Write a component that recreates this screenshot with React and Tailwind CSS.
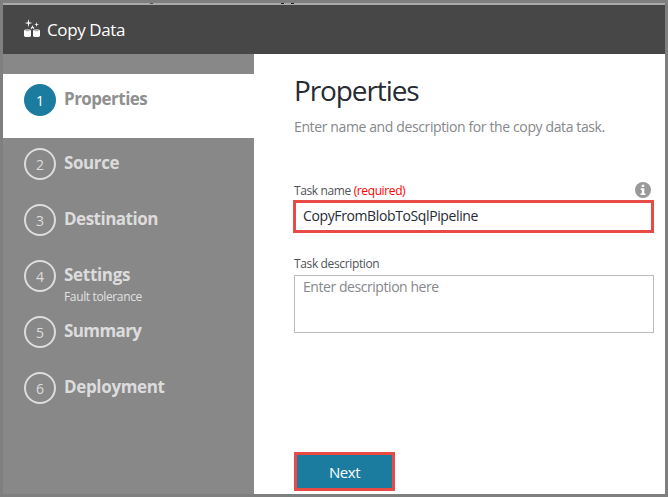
const steps = [
  { n: 1, label: "Properties", active: true, tracking: "tracking-[-0.52px]" },
  { n: 2, label: "Source", tracking: "tracking-[-0.4px]" },
  { n: 3, label: "Destination", tracking: "tracking-[-0.5px]" },
  { n: 4, label: "Settings", note: "Fault tolerance", tracking: "tracking-[-0.3px]" },
  { n: 5, label: "Summary", tracking: "tracking-[-0.6px]" },
  { n: 6, label: "Deployment", tracking: "tracking-[-0.34px]" },
];

function CopyDataIcon() {
  return (
    <svg className="mt-[14px] h-[18px] w-[17px]" viewBox="0 0 17 18" fill="#fff">
      <path d="M4.5 0 L5.2 3.3 L8.5 4 L5.2 4.8 L4.5 8.3 L3.8 4.8 L0.8 4 L3.8 3.3Z" />
      <path d="M12.6 3 L13.1 4.9 L15 5.4 L13.1 5.9 L12.6 8 L12.1 5.9 L10.2 5.4 L12.1 4.9Z" />
      <path d="M8.5 6 L9 7.6 L10.4 9 L9.4 10 L8.5 8.8 L7.4 10 L6.6 9.2 L8 7.6Z" />
      <path d="M0 12 Q0 10.5 1.6 10.5 H5.4 Q7 10.5 7 12 V16.6 Q7 18 5.4 18 H1.6 Q0 18 0 16.6Z" />
      <path d="M9 12 Q9 10.5 10.6 10.5 H14.4 Q16 10.5 16 12 V16.6 Q16 18 14.4 18 H10.6 Q9 18 9 16.6Z" />
      <path d="M1.5 11.7H5.5M10.5 11.7H14.5" stroke="#777" strokeWidth="0.8" />
    </svg>
  );
}

function InfoIcon() {
  return (
    <svg className="mt-px h-4 w-4" viewBox="0 0 16 16">
      <circle cx="8" cy="8" r="8" fill="#999" />
      <path d="M6.7 2.7h2.6v2.2H6.7zM5.7 6.2h3.6v5.4h1.2v1.5H5.5v-1.5h1.3V7.7H5.7z" fill="#fff" />
    </svg>
  );
}

function Step({ step }) {
  return (
    <li className={`flex pl-[21px] pt-[10px] ${step.active ? "h-16 bg-white" : "h-14"}`}>
      <span
        className={`flex h-8 w-8 shrink-0 justify-center rounded-full border-2 text-[14px] leading-[29px] ${
          step.active ? "border-[#1b7c9f] bg-[#1b7c9f] text-white" : "border-[#dcdcdc] text-[#dcdcdc]"
        }`}
      >
        {step.n}
      </span>
      <div className="ml-2">
        <div
          className={`text-[17px] leading-[30px] font-bold whitespace-nowrap ${step.tracking} ${
            step.active ? "text-[#8f8f8f]" : "text-[#dcdcdc]"
          }`}
        >
          {step.label}
        </div>
        {step.note && (
          <div className="-mt-px text-[12px] leading-4 tracking-[-0.36px] whitespace-nowrap text-[#e0e0e0]">{step.note}</div>
        )}
      </div>
    </li>
  );
}

export default function App() {
  return (
    <div className="flex h-[497px] w-[668px] flex-col overflow-hidden border-3 border-[#7f7f7f] bg-white font-['Open_Sans','Noto_Sans',sans-serif]">
      <div className="flex h-[2px] shrink-0 bg-[#aaa]">
        <span className="ml-[147px] h-px w-[3px] bg-[#555]" />
        <span className="ml-[128px] h-px w-[3px] bg-[#222]" />
        <span className="ml-[7px] h-px w-[3px] bg-[#222]" />
      </div>
      <header className="flex h-[49px] shrink-0 bg-[#474747] pl-[21px] text-white">
        <CopyDataIcon />
        <h1 className="ml-[6px] pt-[9px] text-[17px] leading-[31px] tracking-[-0.4px]">Copy Data</h1>
      </header>
      <div className="flex min-h-0 flex-1">
        <ol className="w-[251px] shrink-0 bg-[#888] pt-5">
          {steps.map((s) => (
            <Step key={s.n} step={s} />
          ))}
        </ol>
        <main className="flex flex-1 flex-col items-start pr-[11px] pl-10">
          <h2 className="mt-4 text-[28px] leading-10 tracking-[-1.1px] text-[#262b33]">Properties</h2>
          <p className="mt-[7px] text-[14px] leading-5 tracking-[-0.38px] whitespace-nowrap text-[#85888c]">
            Enter name and description for the copy data task.
          </p>
          <div className="mt-[44px] flex h-[19px] w-full justify-between pr-[3px]">
            <label className="pt-[2px] text-[12px] leading-4 tracking-[-0.38px] text-[#505357]">
              Task name <span className="text-[#f00]">(required)</span>
            </label>
            <InfoIcon />
          </div>
          <div className="-ml-px h-[33px] w-[361px] border-3 border-[#e84a46] pl-[7px] text-[14px] leading-[26px] tracking-[-0.38px] text-[#262b33]">
            CopyFromBlobToSqlPipeline
          </div>
          <label className="mt-[23px] h-[19px] text-[12px] leading-4 tracking-[-0.36px] text-[#505357]">
            Task description
          </label>
          <div className="h-[58px] w-full border border-[#bbb] pl-2 text-[14px] leading-[22px] tracking-[-0.44px] text-[#85888c]">
            Enter description here
          </div>
          <button className="mt-[119px] h-[39px] w-[101px] shrink-0 border-3 border-[#e84a46] bg-[#1b7c9f] text-[15px] leading-[34px] tracking-[-0.45px] text-white">
            Next
          </button>
        </main>
      </div>
    </div>
  );
}
